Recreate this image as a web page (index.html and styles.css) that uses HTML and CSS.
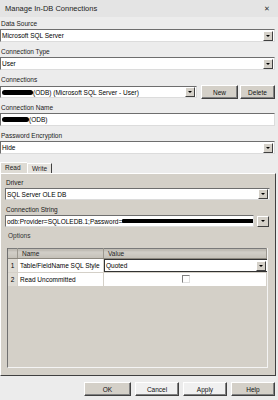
FILE: index.html
```html
<!DOCTYPE html>
<html>

<head>
    <title>Manage In-DB Connections</title>
    <link rel="stylesheet" href="styles.css">
</head>

<body>
    <div class="dialog">
        <div class="titlebar">
            <span class="title">Manage In-DB Connections</span>
            <span class="close">&#x2715;</span>
        </div>

        <div class="content">
            <div class="field">
                <label class="lbl">Data Source</label>
                <div class="select"><span class="val">Microsoft SQL Server</span><span class="drop"></span></div>
            </div>
            <div class="field">
                <label class="lbl">Connection Type</label>
                <div class="select"><span class="val">User</span><span class="drop"></span></div>
            </div>
            <div class="field field-tight">
                <label class="lbl">Connections</label>
                <div class="row">
                    <div class="select select-grow"><span class="val"><span class="redact r-conn"></span>(ODB) (Microsoft SQL Server - User)</span><span class="drop"></span></div>
                    <button class="btn btn-new">New</button>
                    <button class="btn btn-del">Delete</button>
                </div>
            </div>
            <div class="field">
                <label class="lbl">Connection Name</label>
                <div class="textbox"><span class="val"><span class="redact r-name"></span>(ODB)</span></div>
            </div>
            <div class="field">
                <label class="lbl">Password Encryption</label>
                <div class="select"><span class="val">Hide</span><span class="drop"></span></div>
            </div>
        </div>

        <div class="tabs">
            <div class="tab tab-active">Read</div>
            <div class="tab">Write</div>
        </div>

        <div class="panel">
            <div class="field">
                <label class="lbl">Driver</label>
                <div class="select select-small"><span class="val">SQL Server OLE DB</span><span class="drop"></span></div>
            </div>
            <div class="field field-tight">
                <label class="lbl">Connection String</label>
                <div class="row">
                    <div class="textbox textbox-small"><span class="val">odb:Provider=SQLOLEDB.1;Password=<span class="redact r-str"></span></span></div>
                    <span class="drop drop-loose"></span>
                </div>
            </div>
            <div class="lbl lbl-group">Options</div>

            <div class="grid">
                <table>
                    <thead>
                        <tr>
                            <th class="col-num"></th>
                            <th class="col-name">Name</th>
                            <th class="col-value">Value</th>
                        </tr>
                    </thead>
                    <tbody>
                        <tr>
                            <td class="col-num">1</td>
                            <td class="col-name">Table/FieldName SQL Style</td>
                            <td class="col-value cell-edit"><span class="val">Quoted</span><span class="drop"></span></td>
                        </tr>
                        <tr>
                            <td class="col-num">2</td>
                            <td class="col-name">Read Uncommitted</td>
                            <td class="col-value"><span class="check"></span></td>
                        </tr>
                    </tbody>
                </table>
            </div>
        </div>

        <div class="footer">
            <button class="btn btn-foot btn-ok">OK</button>
            <button class="btn btn-foot btn-light">Cancel</button>
            <button class="btn btn-foot btn-light">Apply</button>
            <button class="btn btn-foot">Help</button>
        </div>
    </div>
</body>

</html>
```

FILE: styles.css
```css
body {
    margin: 0;
    padding: 0;
    overflow: hidden;
}

.dialog {
    width: 278px;
    height: 400px;
    background-color: #ececec;
    font-family: "Liberation Sans", Arial, sans-serif;
    font-size: 6.5px;
    color: #000;
    display: flex;
    flex-direction: column;
}

.titlebar {
    height: 17px;
    flex: none;
    background-color: #e4e4e4;
    display: flex;
    align-items: center;
    justify-content: space-between;
    padding: 0 8px 0 5px;
    font-size: 7.5px;
    color: #222;
}

.close {
    font-size: 7px;
    color: #333;
}

.content {
    padding: 2px 3px 0 0;
}

.field {
    margin-bottom: 5px;
}

.field-tight {
    margin-bottom: 4px;
}

.lbl {
    display: block;
    height: 10px;
    line-height: 10px;
    padding-left: 1px;
    color: #1a1a1a;
}

.select,
.textbox {
    height: 13px;
    box-sizing: border-box;
    background-color: #fff;
    border: 1px solid;
    border-color: #6e6e6e #dcdcdc #dcdcdc #6e6e6e;
    display: flex;
    align-items: center;
    padding-left: 1px;
    white-space: nowrap;
    overflow: hidden;
}

.select-small,
.textbox-small {
    height: 12px;
}

.val {
    display: flex;
    align-items: center;
}

.drop {
    position: relative;
    flex: none;
    width: 8px;
    height: 8px;
    margin-left: auto;
    margin-right: 1px;
    background-color: #d4d0c8;
    border: 1px solid;
    border-color: #fff #404040 #404040 #fff;
}

.drop::after {
    content: "";
    position: absolute;
    left: 2px;
    top: 3px;
    border-left: 2px solid transparent;
    border-right: 2px solid transparent;
    border-top: 2px solid #000;
}

.drop-loose {
    width: 10px;
    height: 9px;
    margin-left: 3px;
}

.drop-loose::after {
    left: 3px;
    top: 3px;
}

.row {
    display: flex;
    align-items: center;
}

.select-grow,
.textbox-small {
    flex: 1;
}

.select-grow {
    height: 12px;
}

.redact {
    display: inline-block;
    background-color: #000;
    height: 5px;
    border-radius: 3px;
}

.r-conn {
    width: 31px;
}

.r-name {
    width: 27px;
}

.r-str {
    width: 133px;
    height: 4px;
    border-radius: 2px 3px 3px 1px;
}

.btn {
    font-family: "Liberation Sans", Arial, sans-serif;
    font-size: 6.5px;
    color: #111;
    background-color: #d4d0c8;
    border: 1px solid;
    border-color: #fff #404040 #404040 #fff;
    box-shadow: inset -1px -1px 0 #808080;
    padding: 0;
    height: 14px;
}

.btn-new {
    width: 37px;
    margin-left: 4px;
}

.btn-del {
    width: 35px;
    margin-left: 2px;
}

.tabs {
    display: flex;
    align-items: flex-end;
    height: 11px;
    margin-top: 3px;
}

.tab {
    height: 9px;
    line-height: 9px;
    padding: 0 4px;
    border-top: 1px solid #fff;
    border-left: 1px solid #fff;
    border-right: 1px solid #404040;
    background-color: #e6e4df;
    color: #1a1a1a;
}

.tab-active {
    height: 10px;
    line-height: 10px;
    width: 18px;
    padding: 0 4px;
    border-right: none;
    background-color: #dedbd4;
}

.panel {
    height: 203px;
    box-sizing: border-box;
    width: 276px;
    background-color: #d4d0c8;
    border-left: 1px solid #fff;
    border-top: 1px solid #fff;
    border-right: 1px solid #404040;
    border-bottom: 1px solid #404040;
    padding: 4px 5px 0 4px;
}

.lbl-group {
    padding-left: 3px;
    margin-bottom: 7px;
    color: #333;
}

.grid {
    height: 120px;
    margin: 0 2px 0 2px;
    box-sizing: border-box;
    border-left: 1px solid #707070;
    border-right: 1px solid #f4f4f4;
    border-bottom: 1px solid #f4f4f4;
    background-color: #d4d0c8;
}

table {
    border-collapse: collapse;
    width: 100%;
    table-layout: fixed;
}

th,
td {
    padding: 0 0 0 2px;
    text-align: left;
    font-weight: normal;
    white-space: nowrap;
    overflow: hidden;
}

th {
    height: 9px;
    background: linear-gradient(#b8b4ac, #d2cfc8 30%, #c3bfb7);
    border-top: 1px solid #7a7a7a;
    border-right: 1px solid #9c988f;
    border-bottom: 1px solid #8c887f;
    color: #222;
    padding-left: 4px;
}

td {
    height: 13px;
    background-color: #fff;
    border-bottom: 1px solid #d4d0c8;
    border-right: 1px solid #d4d0c8;
}

.col-num {
    width: 5px;
}

td.col-num {
    background-color: #dedbd4;
    text-align: center;
    padding: 0;
}

.col-name {
    width: 81px;
}

.cell-edit {
    display: flex;
    align-items: center;
    box-sizing: border-box;
    border: 1px solid #333;
    border-right: none;
    padding-left: 1px;
}

.check {
    display: block;
    width: 6px;
    height: 6px;
    margin-left: 76px;
    background-color: #fff;
    border: 1px solid;
    border-color: #808080 #e0e0e0 #e0e0e0 #808080;
}

.footer {
    display: flex;
    justify-content: flex-end;
    padding: 6px 3px 0 0;
    gap: 4px;
}

.btn-foot {
    width: 44px;
    height: 14px;
}

.btn-ok {
    width: 47px;
}

.btn-light {
    background-color: #f0f0f0;
}
```
